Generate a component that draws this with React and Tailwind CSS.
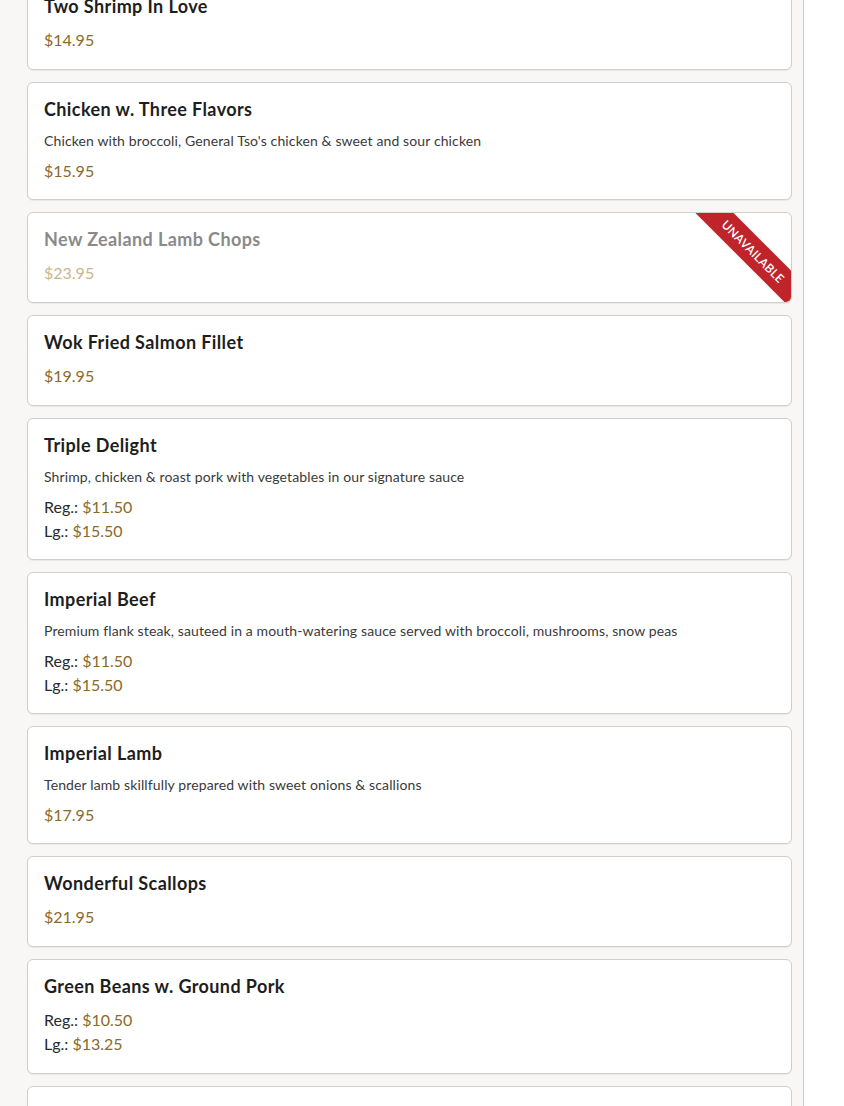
import React from "react";

const items = [
  { name: "Two Shrimp In Love", price: "$14.95" },
  { name: "Chicken w. Three Flavors", desc: "Chicken with broccoli, General Tso's chicken & sweet and sour chicken", price: "$15.95" },
  { name: "New Zealand Lamb Chops", price: "$23.95", unavailable: true },
  { name: "Wok Fried Salmon Fillet", price: "$19.95" },
  { name: "Triple Delight", desc: "Shrimp, chicken & roast pork with vegetables in our signature sauce", reg: "$11.50", lg: "$15.50" },
  { name: "Imperial Beef", desc: "Premium flank steak, sauteed in a mouth-watering sauce served with broccoli, mushrooms, snow peas", reg: "$11.50", lg: "$15.50" },
  { name: "Imperial Lamb", desc: "Tender lamb skillfully prepared with sweet onions & scallions", price: "$17.95" },
  { name: "Wonderful Scallops", price: "$21.95" },
  { name: "Green Beans w. Ground Pork", reg: "$10.50", lg: "$13.25" },
  { name: "Kung Pao Shrimp", price: "$15.95", faded: true },
];

function Card({ item }) {
  const titleColor = item.unavailable ? "text-[#8a8a8a]" : item.faded ? "text-[#ececec]" : "text-[#1e1e1e]";
  const priceColor = item.unavailable ? "text-[#c9b68c]" : item.faded ? "text-[#eeeeee]" : "text-[#8a6a2a]";
  return (
    <div className={`relative shrink-0 overflow-hidden rounded-[6px] border border-[#cfcfcf] bg-white px-4 pt-[15px] shadow-[0_1px_1px_rgba(0,0,0,0.06)] ${item.desc ? "pb-4" : "pb-[17px]"}`}>
      {item.unavailable && (
        <div className="absolute top-[25px] right-[-42px] flex h-[27px] w-[160px] rotate-45 items-center justify-center bg-[#c0242b] text-[12px] font-semibold uppercase tracking-[0.2px] text-white">
          Unavailable
        </div>
      )}
      <div className={`h-[22px] text-[18px] font-bold leading-[22px] tracking-[0.4px] ${titleColor}`}>{item.name}</div>
      <div className="mt-[11px]">
        {item.desc && (
          <div className="mb-2 text-[14px] leading-5 tracking-[0.12px] text-[#3a3a3a]">{item.desc}</div>
        )}
        {item.price && (
          <div className={`text-[16px] leading-6 ${priceColor}`}>{item.price}</div>
        )}
        {item.reg && (
          <div className="text-[16px] leading-6">
            <div className="text-[#2a2a2a]">
              Reg.: <span className="text-[#8a6a2a]">{item.reg}</span>
            </div>
            <div className="text-[#2a2a2a]">
              Lg.: <span className="text-[#8a6a2a]">{item.lg}</span>
            </div>
          </div>
        )}
      </div>
    </div>
  );
}

export default function App() {
  return (
    <div className="h-[1106px] overflow-hidden bg-white" style={{ fontFamily: "Lato, 'Noto Sans', sans-serif" }}>
      <div className="flex h-full w-[804px] flex-col overflow-hidden border-r border-[#cccccc] bg-[#f8f7f5]">
        <div className="-mt-[21px] flex w-[792px] flex-col gap-[12px] pl-[27px]">
          {items.map((it) => (
            <Card key={it.name} item={it} />
          ))}
        </div>
      </div>
    </div>
  );
}
